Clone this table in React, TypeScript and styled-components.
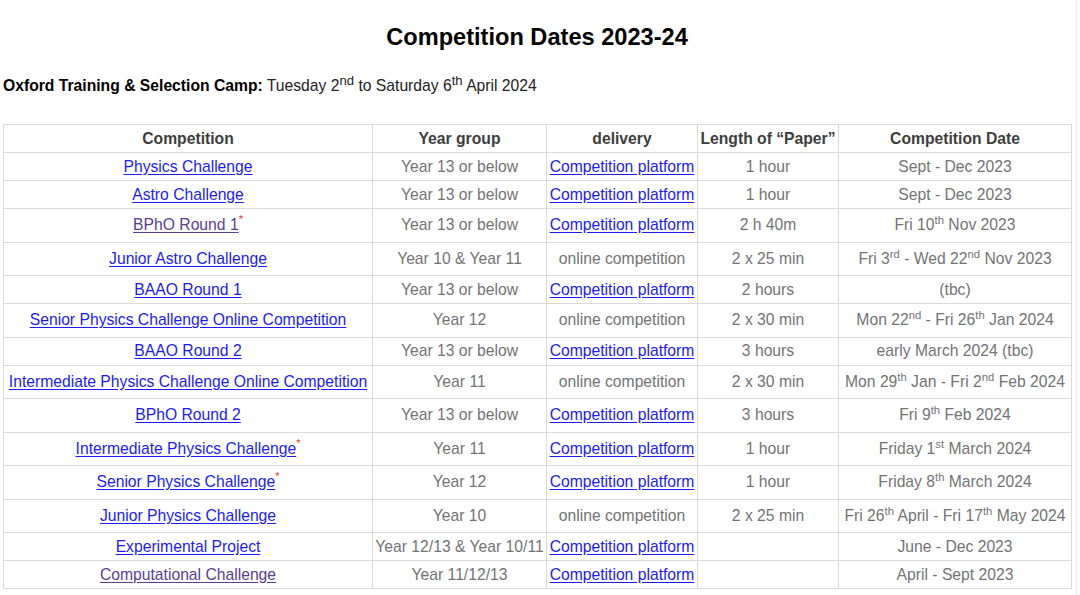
import React from "react";
import styled, { createGlobalStyle } from "styled-components";

const Global = createGlobalStyle`
  html, body { margin: 0; padding: 0; background: #fff; }
  body { font-family: "Liberation Sans", Arial, sans-serif; }
`;

const Page = styled.div`
  width: 1077px;
  min-height: 595px;
  box-sizing: border-box;
  padding: 0 0 0 3px;
  border-right: 1px solid #e6edf5;
`;

const Title = styled.h1`
  margin: 0;
  padding-top: 23px;
  width: 1068px;
  text-align: center;
  font-size: 23.6px;
  line-height: 28px;
  font-weight: bold;
  color: #000;
`;

const Camp = styled.p`
  margin: 0;
  padding-top: 22px;
  font-size: 15.7px;
  line-height: 26px;
  color: #222;
  b { color: #000; }
  sup { line-height: 0; }
`;

const Table = styled.table`
  margin-top: 25px;
  border-collapse: collapse;
  table-layout: fixed;
  width: 1068px;
  font-size: 15.7px;
`;

const Th = styled.th`
  border: 1px solid #dadada;
  padding: 4.5px 0;
  line-height: 18px;
  font-weight: bold;
  color: #3d3d3d;
  text-align: center;
  vertical-align: middle;
`;

const Tr = styled.tr<{ $tall?: boolean }>`
  & > td {
    padding: ${(p) => (p.$tall ? "7.25px 0 7.25px" : "4.5px 0")};
  }
`;

const Td = styled.td`
  border: 1px solid #dadada;
  line-height: 18px;
  color: #737373;
  text-align: center;
  vertical-align: middle;
  white-space: nowrap;
  sup { font-size: 0.72em; line-height: 0; vertical-align: 6px; }
`;

const Link = styled.a<{ $visited?: boolean }>`
  color: ${(p) => (p.$visited ? "#5a3d93" : "#1c1cf0")};
  text-decoration: underline;
  text-underline-offset: 2px;
`;

const Star = styled.sup`
  color: #e53935;
  && { vertical-align: 7px; font-size: 0.7em; }
`;

type Row = {
  name: string;
  visited?: boolean;
  star?: boolean;
  tall?: boolean;
  year: React.ReactNode;
  platform: boolean;
  length: string;
  date: React.ReactNode;
};

const rows: Row[] = [
  { name: "Physics Challenge", year: "Year 13 or below", platform: true, length: "1 hour", date: "Sept - Dec 2023" },
  { name: "Astro Challenge", year: "Year 13 or below", platform: true, length: "1 hour", date: "Sept - Dec 2023" },
  { name: "BPhO Round 1", visited: true, star: true, tall: true, year: "Year 13 or below", platform: true, length: "2 h 40m", date: <>Fri 10<sup>th</sup> Nov 2023</> },
  { name: "Junior Astro Challenge", tall: true, year: "Year 10 & Year 11", platform: false, length: "2 x 25 min", date: <>Fri 3<sup>rd</sup> - Wed 22<sup>nd</sup> Nov 2023</> },
  { name: "BAAO Round 1", year: "Year 13 or below", platform: true, length: "2 hours", date: "(tbc)" },
  { name: "Senior Physics Challenge Online Competition", tall: true, year: "Year 12", platform: false, length: "2 x 30 min", date: <>Mon 22<sup>nd</sup> - Fri 26<sup>th</sup> Jan 2024</> },
  { name: "BAAO Round 2", year: "Year 13 or below", platform: true, length: "3 hours", date: "early March 2024 (tbc)" },
  { name: "Intermediate Physics Challenge Online Competition", tall: true, year: "Year 11", platform: false, length: "2 x 30 min", date: <>Mon 29<sup>th</sup> Jan - Fri 2<sup>nd</sup> Feb 2024</> },
  { name: "BPhO Round 2", tall: true, year: "Year 13 or below", platform: true, length: "3 hours", date: <>Fri 9<sup>th</sup> Feb 2024</> },
  { name: "Intermediate Physics Challenge", star: true, tall: true, year: "Year 11", platform: true, length: "1 hour", date: <>Friday 1<sup>st</sup> March 2024</> },
  { name: "Senior Physics Challenge", star: true, tall: true, year: "Year 12", platform: true, length: "1 hour", date: <>Friday 8<sup>th</sup> March 2024</> },
  { name: "Junior Physics Challenge", tall: true, year: "Year 10", platform: false, length: "2 x 25 min", date: <>Fri 26<sup>th</sup> April - Fri 17<sup>th</sup> May 2024</> },
  { name: "Experimental Project", year: "Year 12/13 & Year 10/11", platform: true, length: "", date: "June - Dec 2023" },
  { name: "Computational Challenge", visited: true, year: "Year 11/12/13", platform: true, length: "", date: "April - Sept 2023" },
];

export default function App() {
  return (
    <>
      <Global />
      <Page>
        <Title>Competition Dates 2023-24</Title>
        <Camp>
          <b>Oxford Training &amp; Selection Camp:</b> Tuesday 2<sup>nd</sup> to Saturday 6<sup>th</sup> April 2024
        </Camp>
        <Table>
          <colgroup>
            <col style={{ width: 369 }} />
            <col style={{ width: 174 }} />
            <col style={{ width: 151 }} />
            <col style={{ width: 141 }} />
            <col style={{ width: 233 }} />
          </colgroup>
          <thead>
            <tr>
              <Th>Competition</Th>
              <Th>Year group</Th>
              <Th>delivery</Th>
              <Th>Length of “Paper”</Th>
              <Th>Competition Date</Th>
            </tr>
          </thead>
          <tbody>
            {rows.map((r) => (
              <Tr key={r.name} $tall={r.tall}>
                <Td>
                  <Link href="#" $visited={r.visited}>{r.name}</Link>
                  {r.star && <Star>*</Star>}
                </Td>
                <Td>{r.year}</Td>
                <Td>{r.platform ? <Link href="#">Competition platform</Link> : "online competition"}</Td>
                <Td>{r.length}</Td>
                <Td>{r.date}</Td>
              </Tr>
            ))}
          </tbody>
        </Table>
      </Page>
    </>
  );
}
